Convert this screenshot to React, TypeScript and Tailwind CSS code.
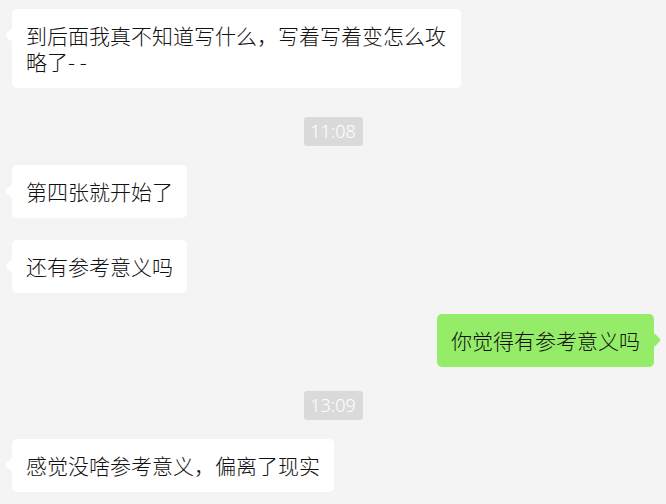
import React from 'react';

type Msg =
  | { kind: 'time'; text: string; mt: string }
  | { kind: 'in' | 'out'; text: string; mt: string; wide?: boolean };

const messages: Msg[] = [
  { kind: 'in', text: '到后面我真不知道写什么，写着写着变怎么攻略了- -', mt: 'mt-[9px]', wide: true },
  { kind: 'time', text: '11:08', mt: 'mt-[29px]' },
  { kind: 'in', text: '第四张就开始了', mt: 'mt-[19px]' },
  { kind: 'in', text: '还有参考意义吗', mt: 'mt-[22px]' },
  { kind: 'out', text: '你觉得有参考意义吗', mt: 'mt-[21px]' },
  { kind: 'time', text: '13:09', mt: 'mt-[24px]' },
  { kind: 'in', text: '感觉没啥参考意义，偏离了现实', mt: 'mt-[19px]' },
];

function Bubble({ msg }: { msg: Msg }) {
  if (msg.kind === 'time') {
    return (
      <div className={`${msg.mt} flex justify-center`}>
        <span className="w-[59px] h-[29px] flex items-center justify-center rounded-[3px] bg-[#dadada] text-white text-[18px] font-light font-['Noto_Sans',sans-serif]">
          {msg.text}
        </span>
      </div>
    );
  }
  const out = msg.kind === 'out';
  return (
    <div className={`${msg.mt} flex ${out ? 'justify-end' : 'justify-start'}`}>
      <div
        className={`relative rounded-[5px] px-[14px] pt-[13px] pb-[14px] text-[21px] leading-[26px] font-light text-[#111111] ${
          out ? 'bg-[#95ec69]' : 'bg-white'
        } ${msg.wide ? 'max-w-[449px]' : ''}`}
      >
        <span
          className={`absolute top-[21px] w-[10px] h-[10px] rotate-45 rounded-[2px] ${
            out ? 'right-[-5px] bg-[#95ec69]' : 'left-[-5px] bg-white'
          }`}
        />
        <span className="relative">{msg.text}</span>
      </div>
    </div>
  );
}

export default function App() {
  return (
    <div className="w-[666px] h-[504px] overflow-hidden bg-[#f4f4f4] px-[12px] flex flex-col font-['Noto_Sans_CJK_SC','Noto_Sans',sans-serif]">
      {messages.map((m, i) => (
        <Bubble key={i} msg={m} />
      ))}
    </div>
  );
}
